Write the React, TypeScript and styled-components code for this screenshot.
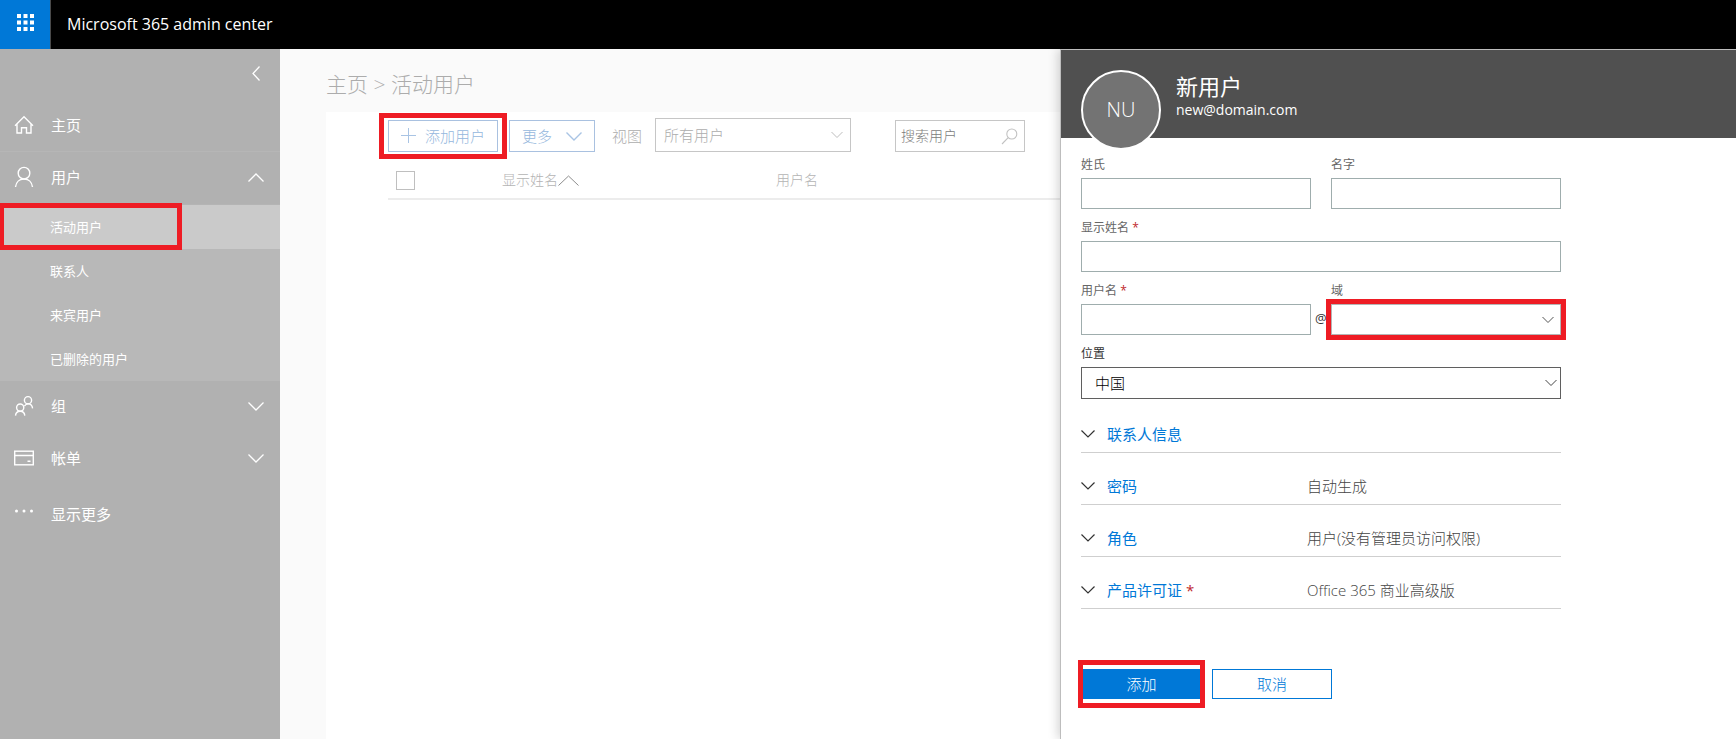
import React from "react";
import styled, { createGlobalStyle } from "styled-components";

const RED = "#ee1c24";
const BLUE = "#0078d7";

const GlobalStyle = createGlobalStyle`
  *, *::before, *::after { box-sizing: border-box; }
  body {
    margin: 0;
    background: #fafafa;
    font-family: "Open Sans", "Noto Sans CJK SC", sans-serif;
    font-size: 15px;
    line-height: 20px;
  }
  button, input, select { font: inherit; color: inherit; border-radius: 0; margin: 0; }
  button { cursor: pointer; }
`;

const Page = styled.div`
  display: flex;
  flex-direction: column;
  min-height: 100vh;
`;

const TopBar = styled.header`
  display: flex;
  align-items: center;
  height: 49px;
  background: #000;
  color: #fff;
`;

const LauncherButton = styled.button`
  display: flex;
  align-items: center;
  justify-content: center;
  width: 51px;
  height: 49px;
  padding: 0 0 5px;
  border: 0;
  border-right: 1px solid #4a4a4a;
  background: ${BLUE};
`;

const ProductName = styled.div`
  margin-left: 16px;
  padding-bottom: 2px;
  font-size: 16px;
`;

const Body = styled.div`
  flex: 1;
  display: flex;
`;

/* Red frame that lies over the highlighted control */
const Highlight = styled.div<{ $x?: number; $y?: number }>`
  position: relative;
  display: flex;
  &::after {
    content: "";
    position: absolute;
    inset: ${(p) => `${-(p.$y ?? 0)}px ${-(p.$x ?? 0)}px`};
    border: 5px solid ${RED};
    pointer-events: none;
  }
`;

const Sidebar = styled.nav`
  flex: 0 0 280px;
  background: #b1b1b1;
  color: #fff;
`;

const CollapseButton = styled.button`
  display: flex;
  align-items: center;
  justify-content: flex-end;
  width: 100%;
  height: 51px;
  padding: 0 20px 2px 0;
  border: 0;
  background: none;
`;

const NavButton = styled.button<{ $divided?: boolean; $last?: boolean }>`
  display: grid;
  grid-template-columns: 20px 1fr auto;
  column-gap: 17px;
  align-items: center;
  width: 100%;
  height: 52px;
  margin-top: ${(p) => (p.$last ? 4 : 0)}px;
  padding: 0 16px 2px 14px;
  border: 0;
  border-bottom: ${(p) => (p.$divided ? "1px solid #b6b6b6" : "0")};
  background: none;
  text-align: left;
  svg { display: block; }
`;

const SubMenu = styled.div`
  border-top: 1px solid #b4b4b4;
  background: #b8b8b8;
`;

const SubItem = styled.a<{ $active?: boolean }>`
  position: relative;
  display: flex;
  align-items: center;
  height: 44px;
  padding-left: 50px;
  background: ${(p) => (p.$active ? "#cacaca" : "transparent")};
  color: #fff;
  font-size: 13px;
  text-decoration: none;
  &::after {
    content: "";
    display: ${(p) => (p.$active ? "block" : "none")};
    position: absolute;
    inset: -2px 98px -1px 0;
    border: 5px solid ${RED};
    border-left-width: 4px;
  }
`;

const Main = styled.main`
  flex: 1;
  min-width: 0;
  display: flex;
  flex-direction: column;
  padding-left: 46px;
  overflow: hidden;
`;

const Breadcrumb = styled.h1`
  margin: 0;
  padding: 20px 0 13px;
  font-size: 21px;
  font-weight: 300;
  line-height: 30px;
  color: #acacac;
`;

const Card = styled.section`
  flex: 1;
  padding: 6px 0 0 62px;
  background: #fff;
`;

const Toolbar = styled.div`
  display: flex;
  align-items: flex-end;
  color: #adadad;
  font-weight: 300;
`;

const ToolButton = styled.button`
  display: flex;
  align-items: center;
  gap: 8px;
  height: 32px;
  padding: 0 12px;
  border: 1px solid #a9c1e0;
  background: #fff;
  color: #95b7dd;
  font-weight: 300;
  white-space: nowrap;
`;

const MoreButton = styled(ToolButton)`
  gap: 14px;
  margin: 0 17px 0 11px;
`;

const ViewLabel = styled.label`
  margin-right: 13px;
  line-height: 32px;
  white-space: nowrap;
`;

const SelectBox = styled.div<{ $width?: string; $inset?: number }>`
  position: relative;
  flex: none;
  width: ${(p) => p.$width ?? "100%"};
  svg {
    position: absolute;
    top: 50%;
    right: ${(p) => p.$inset ?? 6}px;
    transform: translateY(-50%);
    pointer-events: none;
  }
`;

const Select = styled.select<{ $tone: string; $height: number; $pad?: number }>`
  display: block;
  appearance: none;
  width: 100%;
  height: ${(p) => p.$height}px;
  padding: 0 24px 0 ${(p) => p.$pad ?? 8}px;
  border: 1px solid ${(p) => p.$tone};
  background: #fff;
  font-weight: 300;
`;

const SearchBox = styled.div`
  display: flex;
  align-items: center;
  width: 130px;
  height: 32px;
  margin-left: 44px;
  border: 1px solid #c6c6c6;
`;

const SearchInput = styled.input`
  flex: 1;
  min-width: 0;
  padding: 0 0 0 5px;
  border: 0;
  background: none;
  font-size: 14px;
  font-weight: 300;
  &::placeholder { color: #7c7c7c; opacity: 1; }
`;

const SearchButton = styled.button`
  display: flex;
  padding: 0 6px;
  border: 0;
  background: none;
`;

const UserTable = styled.table`
  width: 100%;
  margin-top: 10px;
  table-layout: fixed;
  border-collapse: collapse;
  color: #b4b4b4;
  font-size: 14px;
`;

const HeadCell = styled.th<{ $width?: number }>`
  width: ${(p) => (p.$width ? `${p.$width}px` : "auto")};
  height: 37px;
  padding: 0;
  border-bottom: 2px solid #ececec;
  font-weight: 300;
  text-align: left;
`;

const CheckBox = styled.input`
  display: block;
  appearance: none;
  width: 19px;
  height: 19px;
  margin-left: 8px;
  border: 1px solid #bfbfbf;
  background: #fff;
`;

const SortButton = styled.button`
  display: flex;
  align-items: center;
  padding: 0;
  border: 0;
  background: none;
  font-weight: 300;
`;

const Panel = styled.aside`
  position: relative;
  flex: 0 0 676px;
  border-top: 1px solid #bdbdbd;
  border-left: 1px solid #bdbdbd;
  background: #fff;
  box-shadow: -2px 0 10px rgba(0, 0, 0, 0.18);
  clip-path: inset(0 0 0 -16px);
`;

const PanelHeader = styled.header`
  display: flex;
  gap: 15px;
  height: 88px;
  padding: 20px 20px 0;
  background: #505050;
  color: #fff;
`;

const Avatar = styled.div`
  display: flex;
  align-items: center;
  justify-content: center;
  flex: none;
  width: 80px;
  height: 80px;
  border: 2px solid #fff;
  border-radius: 50%;
  background: #737373;
  font-size: 20px;
  font-weight: 300;
`;

const PanelTitle = styled.h2`
  margin: 0;
  padding-top: 2px;
  font-size: 22px;
  font-weight: 400;
  line-height: 28px;
`;

const Email = styled.div`
  font-size: 14px;
`;

const Form = styled.form`
  width: 500px;
  max-width: 100%;
  padding: 18px 0 30px 20px;
`;

const Fields = styled.div`
  display: grid;
  grid-template-columns: 1fr 1fr;
  column-gap: 20px;
  row-gap: 10px;
`;

const Field = styled.div<{ $wide?: boolean }>`
  grid-column: ${(p) => (p.$wide ? "1 / -1" : "auto")};
  min-width: 0;
`;

const Label = styled.label<{ $dark?: boolean }>`
  display: block;
  margin-bottom: 4px;
  color: ${(p) => (p.$dark ? "#333" : "#666")};
  font-size: 12px;
  line-height: 18px;
`;

const Star = styled.span`
  color: #c0272d;
`;

const TextInput = styled.input`
  display: block;
  width: 100%;
  height: 31px;
  padding: 0 8px;
  border: 1px solid #9fadad;
  background: #fff;
`;

const WithAt = styled.div`
  position: relative;
`;

const AtSign = styled.span`
  position: absolute;
  left: calc(100% + 4px);
  top: 4px;
  color: #333;
  font-size: 13px;
`;

const Sections = styled.div`
  margin-top: 2px;
`;

const SectionRow = styled.div`
  display: grid;
  grid-template-columns: 226px 1fr;
  align-items: center;
  height: 52px;
  padding-top: 14px;
  border-bottom: 1px solid #cfcfcf;
  color: #444;
  font-weight: 300;
`;

const SectionButton = styled.button`
  display: flex;
  align-items: center;
  padding: 0;
  border: 0;
  background: none;
  color: ${BLUE};
  font-weight: 400;
  svg { margin-right: 12px; }
  ${Star} { margin-left: 4px; }
`;

const Actions = styled.div`
  display: flex;
  gap: 12px;
  margin-top: 60px;
  padding-left: 2px;
`;

const ActionButton = styled.button<{ $primary?: boolean }>`
  width: ${(p) => (p.$primary ? 117 : 120)}px;
  height: 30px;
  padding: 0;
  border: 1px solid ${BLUE};
  background: ${(p) => (p.$primary ? BLUE : "#fff")};
  color: ${(p) => (p.$primary ? "#fff" : BLUE)};
  font-weight: 300;
`;

type Direction = "up" | "down" | "left";

function Chevron({ to = "down", w, h, color, stroke = 1 }: { to?: Direction; w: number; h: number; color: string; stroke?: number }) {
  const points = {
    down: `0.5,0.5 ${w / 2},${h - 1} ${w - 0.5},0.5`,
    up: `0.5,${h - 0.5} ${w / 2},1 ${w - 0.5},${h - 0.5}`,
    left: `${w - 0.5},0.5 1,${h / 2} ${w - 0.5},${h - 0.5}`,
  };
  return (
    <svg width={w} height={h} viewBox={`0 0 ${w} ${h}`} fill="none" stroke={color} strokeWidth={stroke} aria-hidden="true">
      <polyline points={points[to]} />
    </svg>
  );
}

const Waffle = () => (
  <svg width="17" height="17" viewBox="0 0 17 17" fill="#fff" aria-hidden="true">
    {[0, 6.5, 13].map((y) => [0, 6.5, 13].map((x) => <rect key={`${x}-${y}`} x={x} y={y} width="4" height="4" />))}
  </svg>
);

const NavSvg = ({ children }: { children: React.ReactNode }) => (
  <svg width="20" height="22" viewBox="0 0 20 22" fill="none" stroke="#fff" strokeWidth="1.4" aria-hidden="true">
    {children}
  </svg>
);

const HomeIcon = () => (
  <NavSvg>
    <path d="M1 11.8 10 2.8 19 11.8M3 10.2V19H7.5V13.8H12.5V19H17V10.2" />
  </NavSvg>
);

const UserIcon = () => (
  <NavSvg>
    <circle cx="10" cy="7.2" r="5.8" />
    <path d="M1.5 21C2 16.2 5.4 13 10 13S18 16.2 18.5 21" />
  </NavSvg>
);

const GroupIcon = () => (
  <NavSvg>
    <circle cx="14" cy="5.2" r="3.6" />
    <path d="M10.4 11.2C11.4 9.6 12.6 8.9 14 8.9 16.6 8.9 18.3 10.4 18.6 13.4" />
    <circle cx="6.2" cy="12.6" r="3.6" />
    <path d="M1.5 20.6C1.8 17.8 3.6 16.3 6.2 16.3S10.5 17.8 10.8 20.6" />
  </NavSvg>
);

const BillIcon = () => (
  <NavSvg>
    <rect x="0.7" y="4.2" width="18.6" height="13.6" />
    <path d="M0.7 8.5H19.3M13.5 14.2H16.5" />
  </NavSvg>
);

const DotsIcon = () => (
  <svg width="20" height="12" viewBox="0 0 20 12" fill="#fff" aria-hidden="true">
    <circle cx="2.5" cy="3" r="1.5" />
    <circle cx="10" cy="3" r="1.5" />
    <circle cx="17.5" cy="3" r="1.5" />
  </svg>
);

const PlusIcon = () => (
  <svg width="16" height="16" viewBox="0 0 16 16" stroke="#a9c4e4" aria-hidden="true">
    <path d="M7.5 0V15M0 7.5H15" />
  </svg>
);

const SearchIcon = () => (
  <svg width="17" height="17" viewBox="0 0 17 17" fill="none" stroke="#c2c2c2" strokeWidth="1.1" aria-hidden="true">
    <circle cx="10.8" cy="6" r="5" />
    <path d="M7.2 9.6 1 16" />
  </svg>
);

const subItems = ["活动用户", "联系人", "来宾用户", "已删除的用户"];

const sections = [
  { title: "联系人信息", value: "" },
  { title: "密码", value: "自动生成" },
  { title: "角色", value: "用户(没有管理员访问权限)" },
  { title: "产品许可证", value: "Office 365 商业高级版", required: true },
];

export default function App() {
  return (
    <Page>
      <GlobalStyle />
      <TopBar>
        <LauncherButton aria-label="Apps"><Waffle /></LauncherButton>
        <ProductName>Microsoft 365 admin center</ProductName>
      </TopBar>
      <Body>
        <Sidebar>
          <CollapseButton aria-label="Collapse"><Chevron to="left" w={8} h={15} color="#fff" stroke={1.3} /></CollapseButton>
          <NavButton $divided><HomeIcon />主页</NavButton>
          <NavButton aria-expanded="true"><UserIcon />用户<Chevron to="up" w={16} h={9} color="#fff" stroke={1.3} /></NavButton>
          <SubMenu>
            {subItems.map((item, i) => (
              <SubItem key={item} href="#" $active={i === 0}>{item}</SubItem>
            ))}
          </SubMenu>
          <NavButton><GroupIcon />组<Chevron w={16} h={9} color="#fff" stroke={1.3} /></NavButton>
          <NavButton><BillIcon />帐单<Chevron w={16} h={9} color="#fff" stroke={1.3} /></NavButton>
          <NavButton $last><DotsIcon />显示更多</NavButton>
        </Sidebar>

        <Main>
          <Breadcrumb>主页 &gt; 活动用户</Breadcrumb>
          <Card>
            <Toolbar>
              <Highlight $x={9} $y={7}>
                <ToolButton><PlusIcon />添加用户</ToolButton>
              </Highlight>
              <MoreButton>更多<Chevron w={16} h={9} color="#a9c4e4" stroke={1.4} /></MoreButton>
              <ViewLabel htmlFor="view">视图</ViewLabel>
              <SelectBox $width="196px" $inset={8}>
                <Select id="view" $tone="#c6c6c6" $height={34}><option>所有用户</option></Select>
                <Chevron w={12} h={7} color="#bdbdbd" />
              </SelectBox>
              <SearchBox>
                <SearchInput placeholder="搜索用户" aria-label="搜索用户" />
                <SearchButton aria-label="搜索"><SearchIcon /></SearchButton>
              </SearchBox>
            </Toolbar>
            <UserTable>
              <thead>
                <tr>
                  <HeadCell $width={114}><CheckBox type="checkbox" aria-label="全选" /></HeadCell>
                  <HeadCell $width={274}>
                    <SortButton>显示姓名<Chevron to="up" w={21} h={11} color="#8c8c8c" /></SortButton>
                  </HeadCell>
                  <HeadCell>用户名</HeadCell>
                </tr>
              </thead>
            </UserTable>
          </Card>
        </Main>

        <Panel>
          <PanelHeader>
            <Avatar>NU</Avatar>
            <div>
              <PanelTitle>新用户</PanelTitle>
              <Email>new@domain.com</Email>
            </div>
          </PanelHeader>
          <Form onSubmit={(e) => e.preventDefault()}>
            <Fields>
              <Field>
                <Label htmlFor="last">姓氏</Label>
                <TextInput id="last" />
              </Field>
              <Field>
                <Label htmlFor="first">名字</Label>
                <TextInput id="first" />
              </Field>
              <Field $wide>
                <Label htmlFor="display">显示姓名 <Star>*</Star></Label>
                <TextInput id="display" />
              </Field>
              <Field>
                <Label htmlFor="user">用户名 <Star>*</Star></Label>
                <WithAt>
                  <TextInput id="user" />
                  <AtSign>@</AtSign>
                </WithAt>
              </Field>
              <Field>
                <Label htmlFor="domain">域</Label>
                <Highlight $x={5} $y={5}>
                  <SelectBox $inset={7}>
                    <Select id="domain" $tone="#b5b5b5" $height={31} defaultValue=""><option value="" /></Select>
                    <Chevron w={12} h={7} color="#555" />
                  </SelectBox>
                </Highlight>
              </Field>
              <Field $wide>
                <Label htmlFor="location" $dark>位置</Label>
                <SelectBox $inset={4}>
                  <Select id="location" $tone="#5f5f5f" $height={32} $pad={13}><option>中国</option></Select>
                  <Chevron w={12} h={7} color="#444" />
                </SelectBox>
              </Field>
            </Fields>
            <Sections>
              {sections.map((s) => (
                <SectionRow key={s.title}>
                  <SectionButton type="button">
                    <Chevron w={14} h={8} color="#333" stroke={1.2} />
                    {s.title}
                    {s.required && <Star>*</Star>}
                  </SectionButton>
                  <span>{s.value}</span>
                </SectionRow>
              ))}
            </Sections>
            <Actions>
              <Highlight $x={5} $y={9}>
                <ActionButton $primary>添加</ActionButton>
              </Highlight>
              <ActionButton type="button">取消</ActionButton>
            </Actions>
          </Form>
        </Panel>
      </Body>
    </Page>
  );
}
